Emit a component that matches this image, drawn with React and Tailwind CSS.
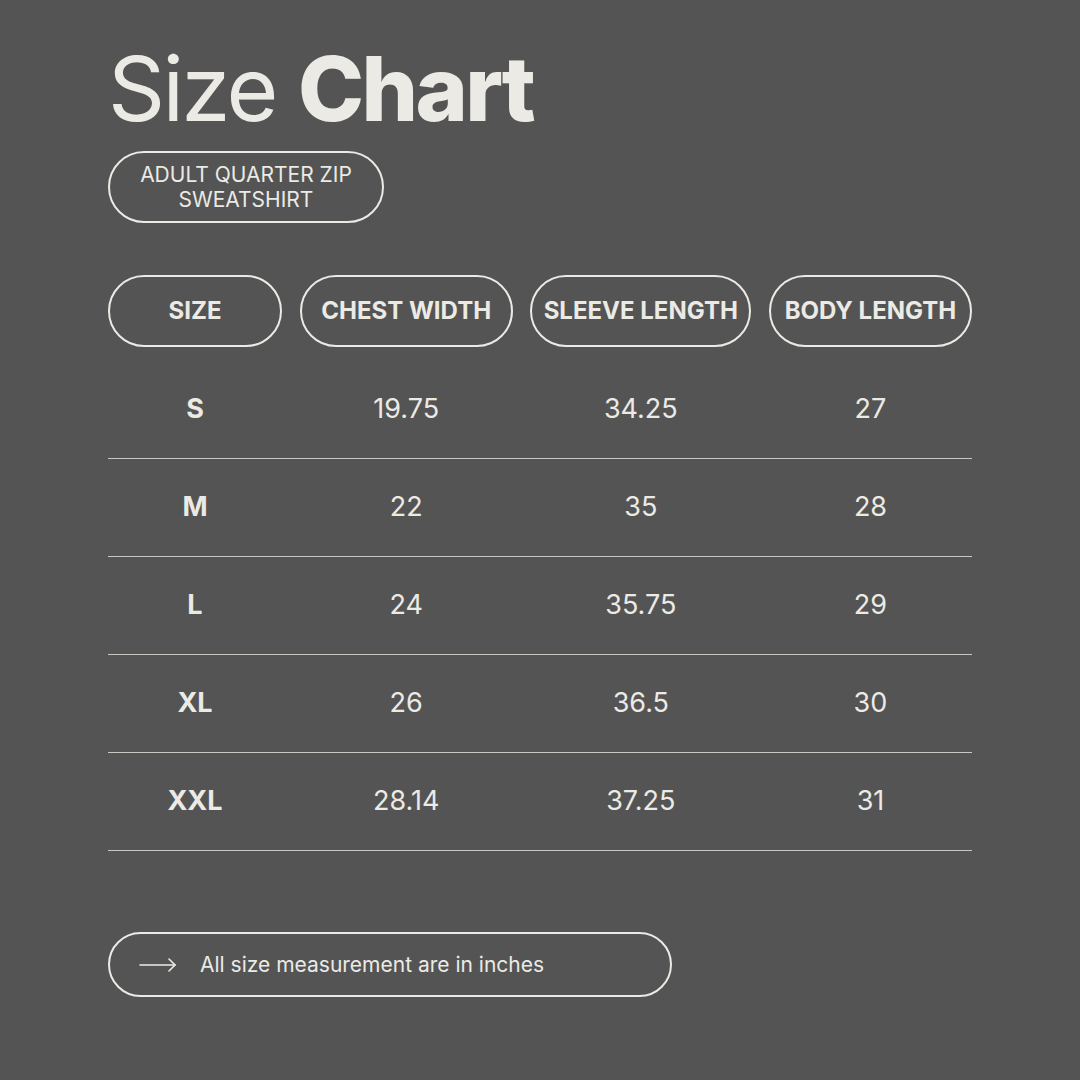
const headers = [
  { label: "SIZE", w: "w-[174px]" },
  { label: "CHEST WIDTH", w: "w-[213px]" },
  { label: "SLEEVE LENGTH", w: "w-[221px]" },
  { label: "BODY LENGTH", w: "w-[203px]" },
];

const rows = [
  ["S", "19.75", "34.25", "27"],
  ["M", "22", "35", "28"],
  ["L", "24", "35.75", "29"],
  ["XL", "26", "36.5", "30"],
  ["XXL", "28.14", "37.25", "31"],
];

const cols = "grid grid-cols-[174px_213px_221px_203px] justify-between";

export default function App() {
  return (
    <div
      className="w-[1080px] h-[1080px] bg-[#545454] text-[#ebeae5] px-[108px] pt-[44px]"
      style={{ fontFamily: "Inter, 'Liberation Sans', sans-serif" }}
    >
      <h1 className="text-[89px] leading-none tracking-[-0.03em]">
        <span className="font-normal">Size </span>
        <span className="font-extrabold">Chart</span>
      </h1>

      <div className="mt-[18px] w-[276px] h-[72px] rounded-full border-2 border-[#ebeae5] flex items-center justify-center text-center text-[21px] leading-[25px]">
        ADULT QUARTER ZIP
        <br />
        SWEATSHIRT
      </div>

      <div className={`${cols} mt-[52px]`}>
        {headers.map((h) => (
          <div
            key={h.label}
            className={`${h.w} h-[72px] rounded-full border-2 border-[#ebeae5] flex items-center justify-center text-[24px] font-bold`}
          >
            {h.label}
          </div>
        ))}
      </div>

      <div className="mt-[14px]">
        {rows.map((r) => (
          <div key={r[0]} className={`${cols} h-[98px] items-center border-b border-[#c9c8c3]`}>
            {r.map((c, i) => (
              <div
                key={i}
                className={`text-center text-[27px] ${i === 0 ? "font-bold" : "font-normal"}`}
              >
                {c}
              </div>
            ))}
          </div>
        ))}
      </div>

      <div className="mt-[81px] w-[564px] h-[65px] rounded-full border-2 border-[#ebeae5] flex items-center pl-[29px] gap-[23px]">
        <svg width="38" height="14" viewBox="0 0 38 14" fill="none" stroke="#ebeae5" strokeWidth="1.6" strokeLinecap="round">
          <path d="M1 7h35" />
          <path d="M30 1l6 6-6 6" />
        </svg>
        <span className="text-[21px]">All size measurement are in inches</span>
      </div>
    </div>
  );
}
